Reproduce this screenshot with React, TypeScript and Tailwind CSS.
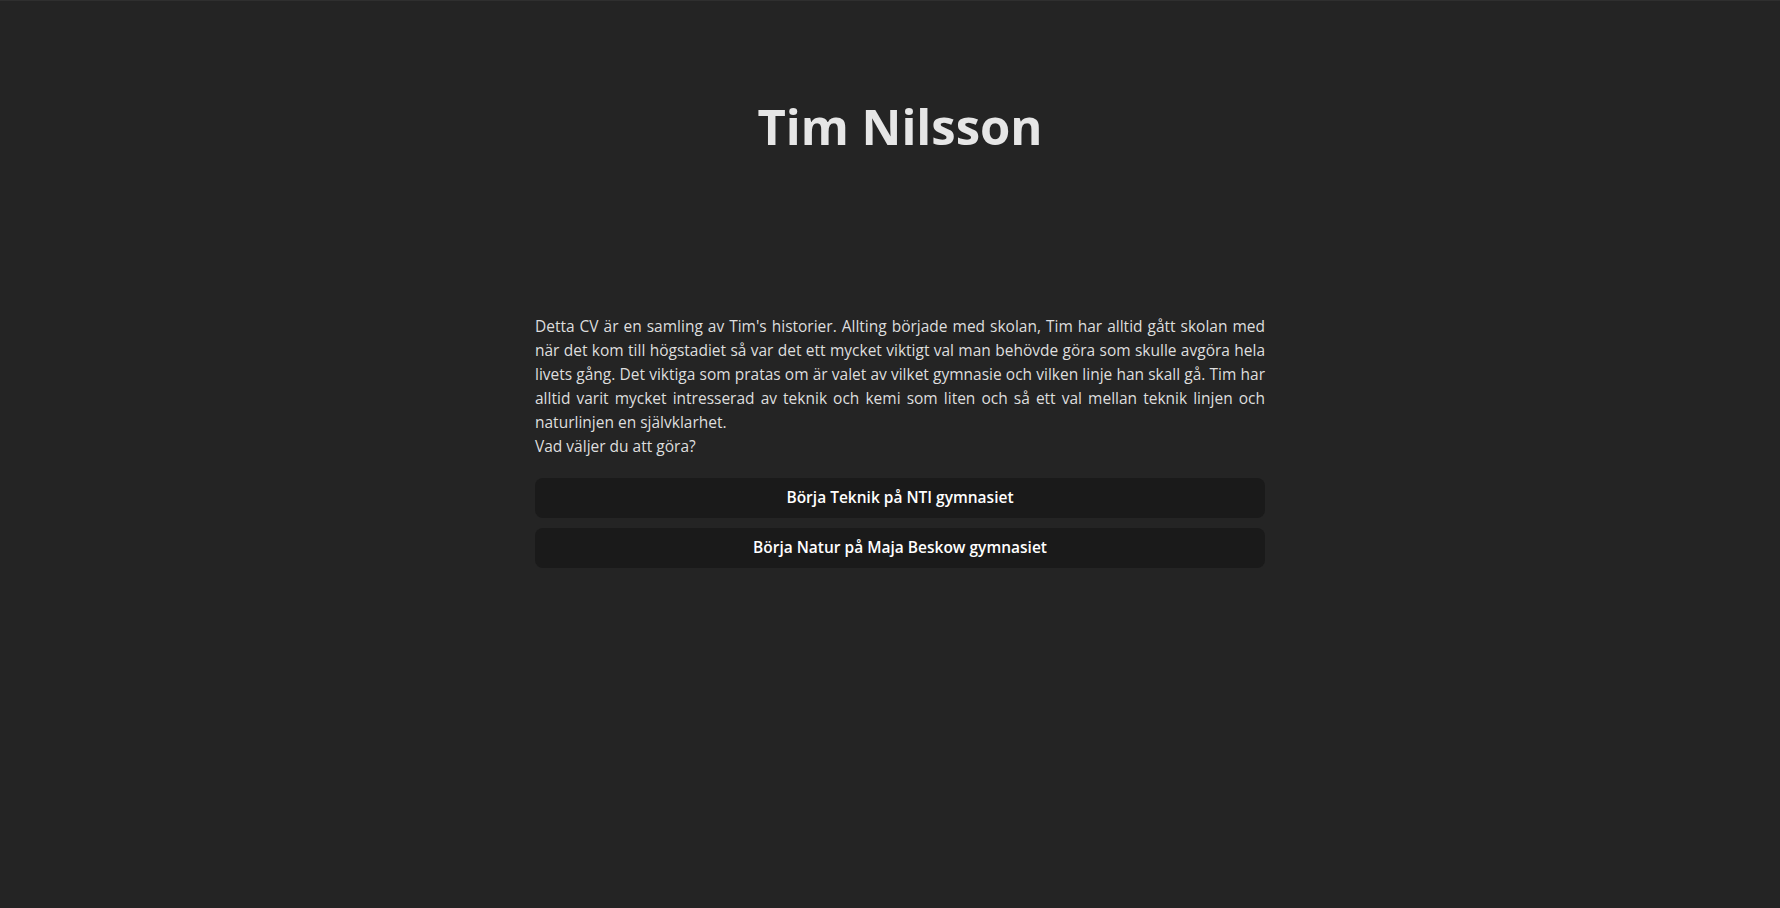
export default function App() {
  const val = [
    'Börja Teknik på NTI gymnasiet',
    'Börja Natur på Maja Beskow gymnasiet',
  ];

  return (
    <div
      className="min-h-screen bg-[#242424] border-t border-[#2f2f2f] text-[#dedede] pl-[20px]"
      style={{ fontFamily: '"Open Sans", "Noto Sans", sans-serif' }}
    >
      <div className="w-[730px] mx-auto pt-[97px]">
        {/* Rubrik */}
        <h1 className="text-center text-[49px] leading-[56px] font-bold text-[#e6e6e6]">
          Tim Nilsson
        </h1>

        {/* Berättelse */}
        <p className="mt-[160px] text-[15.5px] leading-[24px] text-justify">
          Detta CV är en samling av Tim's historier. Allting började med skolan,
          Tim har alltid gått skolan med när det kom till högstadiet så var det
          ett mycket viktigt val man behövde göra som skulle avgöra hela livets
          gång. Det viktiga som pratas om är valet av vilket gymnasie och vilken
          linje han skall gå. Tim har alltid varit mycket intresserad av teknik
          och kemi som liten och så ett val mellan teknik linjen och naturlinjen
          en självklarhet.
          <br />
          Vad väljer du att göra?
        </p>

        {/* Val */}
        <div className="mt-[20px] flex flex-col gap-[10px]">
          {val.map((text) => (
            <button
              key={text}
              className="w-full h-[40px] rounded-lg bg-[#1a1a1a] text-[15.5px] font-semibold text-white"
            >
              {text}
            </button>
          ))}
        </div>
      </div>
    </div>
  );
}
